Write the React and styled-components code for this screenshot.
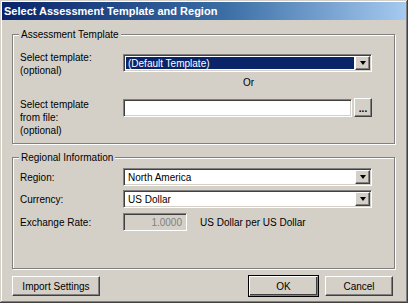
import React from "react";
import styled, { createGlobalStyle } from "styled-components";

const GlobalStyle = createGlobalStyle`
  html, body {
    margin: 0;
    padding: 0;
    background: #d4d0c8;
  }
  body {
    font-family: "Liberation Sans", Arial, sans-serif;
    font-size: 10px;
    color: #000;
  }
`;

const Window = styled.div`
  box-sizing: border-box;
  width: 408px;
  height: 303px;
  padding: 2px;
  background: #d4d0c8;
  box-shadow: inset -1px -1px 0 #404040, inset 1px 1px 0 #d4d0c8,
    inset -2px -2px 0 #808080, inset 2px 2px 0 #ffffff;
  display: flex;
  flex-direction: column;
`;

const TitleBar = styled.div`
  height: 18px;
  flex: none;
  display: flex;
  align-items: center;
  padding-left: 2px;
  background: linear-gradient(to right, #0a246a 0%, #3a6ea5 55%, #a6caf0 100%);
  color: #fff;
  font-weight: bold;
  font-size: 11px;
  white-space: nowrap;
`;

const Body = styled.div`
  display: flex;
  flex-direction: column;
  padding: 14px 11px 0 10px;
`;

const Group = styled.div`
  position: relative;
  border: 1px solid #808080;
  box-shadow: inset 1px 1px 0 #fff, 1px 1px 0 #fff;
  padding: ${(p) => p.$pad};
  margin-top: ${(p) => p.$top || 0}px;
  display: flex;
  flex-direction: column;
  gap: ${(p) => p.$gap || 0}px;
`;

const Legend = styled.span`
  position: absolute;
  top: -7px;
  left: 6px;
  padding: 0 2px;
  background: #d4d0c8;
  line-height: 13px;
`;

const Row = styled.div`
  display: flex;
  align-items: ${(p) => (p.$top ? "flex-start" : "center")};
  margin-top: ${(p) => p.$mt || 0}px;
`;

const Label = styled.div`
  width: 103px;
  flex: none;
  line-height: 13px;
`;

const Sunken = styled.div`
  box-sizing: border-box;
  height: 18px;
  margin-top: ${(p) => p.$mt || 0}px;
  border: 1px solid;
  border-color: #808080 #fff #fff #808080;
  box-shadow: inset 1px 1px 0 #404040, inset -1px -1px 0 #d4d0c8;
  background: ${(p) => (p.$disabled ? "#d4d0c8" : "#fff")};
  display: flex;
  align-items: stretch;
  padding: 2px;
`;

const Combo = styled(Sunken)`
  width: 249px;
`;

const ComboText = styled.div`
  flex: 1;
  display: flex;
  align-items: center;
  padding-left: 2px;
  margin-right: 1px;
  background: ${(p) => (p.$selected ? "#0a246a" : "transparent")};
  color: ${(p) => (p.$selected ? "#fff" : "#000")};
`;

const raised = `
  box-sizing: border-box;
  background: #d4d0c8;
  border: 1px solid;
  border-color: #fff #404040 #404040 #fff;
  box-shadow: inset -1px -1px 0 #808080;
`;

const DropButton = styled.div`
  ${raised}
  width: 15px;
  margin: -1px -1px -1px 0;
  display: flex;
  align-items: center;
  justify-content: center;
`;

const Arrow = styled.span`
  width: 0;
  height: 0;
  border-left: 3.5px solid transparent;
  border-right: 3.5px solid transparent;
  border-top: 4px solid #000;
`;

const FileField = styled.div`
  display: flex;
  gap: 2px;
  margin-top: 1px;
`;

const TextBox = styled(Sunken)`
  width: ${(p) => p.$w}px;
  justify-content: ${(p) => (p.$right ? "flex-end" : "flex-start")};
  align-items: center;
  color: ${(p) => (p.$disabled ? "#808080" : "#000")};
  padding-right: 4px;
`;

const Browse = styled.div`
  ${raised}
  width: 18px;
  height: 19px;
  margin-top: -1px;
  display: flex;
  align-items: flex-end;
  justify-content: center;
  padding-bottom: 3px;
  font-weight: bold;
  line-height: 8px;
`;

const Or = styled.div`
  line-height: 12px;
  padding-left: 103px;
  width: 249px;
  text-align: center;
  margin-left: 1px;
`;

const Unit = styled.span`
  margin-left: 13px;
`;

const Footer = styled.div`
  display: flex;
  margin-top: 7px;
  padding-right: 2px;
  gap: 7px;
`;

const Button = styled.button`
  ${raised}
  font: inherit;
  color: #000;
  height: 20px;
  width: ${(p) => p.$w}px;
  padding: 0;
  margin-left: ${(p) => (p.$push ? "auto" : "0")};
  outline: ${(p) => (p.$default ? "1px solid #000" : "none")};
  outline-offset: 0;
  ${(p) =>
    p.$default &&
    `border-color: #fff #808080 #808080 #fff; box-shadow: inset -1px -1px 0 #404040; outline: 1px solid #000;`}
`;

export default function App() {
  return (
    <>
      <GlobalStyle />
      <Window>
        <TitleBar>Select Assessment Template and Region</TitleBar>
        <Body>
          <Group $pad="16px 0 6px 7px">
            <Legend>Assessment Template</Legend>
            <Row $top>
              <Label>
                Select template:
                <br />
                (optional)
              </Label>
              <Combo $mt={3}>
                <ComboText $selected>(Default Template)</ComboText>
                <DropButton>
                  <Arrow />
                </DropButton>
              </Combo>
            </Row>
            <Or>Or</Or>
            <Row $top $mt={9}>
              <Label>
                Select template
                <br />
                from file:
                <br />
                (optional)
              </Label>
              <FileField>
                <TextBox $w={229} />
                <Browse>...</Browse>
              </FileField>
            </Row>
          </Group>

          <Group $pad="10px 0 37px 7px" $top={13} $gap={4}>
            <Legend>Regional Information</Legend>
            <Row>
              <Label>Region:</Label>
              <Combo>
                <ComboText>North America</ComboText>
                <DropButton>
                  <Arrow />
                </DropButton>
              </Combo>
            </Row>
            <Row>
              <Label>Currency:</Label>
              <Combo>
                <ComboText>US Dollar</ComboText>
                <DropButton>
                  <Arrow />
                </DropButton>
              </Combo>
            </Row>
            <Row $mt={1}>
              <Label>Exchange Rate:</Label>
              <TextBox $w={64} $right $disabled>
                1.0000
              </TextBox>
              <Unit>US Dollar per US Dollar</Unit>
            </Row>
          </Group>

          <Footer>
            <Button $w={88}>Import Settings</Button>
            <Button $w={69} $push $default>
              OK
            </Button>
            <Button $w={68}>Cancel</Button>
          </Footer>
        </Body>
      </Window>
    </>
  );
}
